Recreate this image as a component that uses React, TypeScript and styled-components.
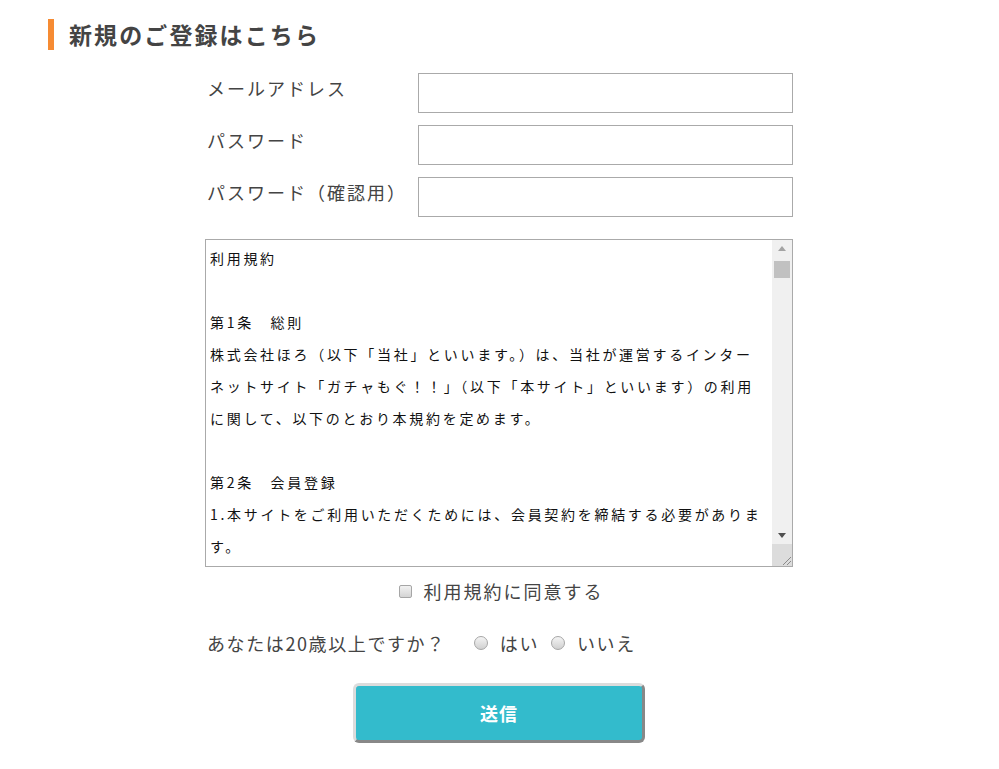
import styled, { createGlobalStyle } from 'styled-components';

const GlobalStyle = createGlobalStyle`
  body {
    margin: 0;
    background: #fff;
    font-family: "Noto Sans CJK JP", "Noto Sans", sans-serif;
    color: #444;
  }
`;

//Styles
const Page = styled.div`
  padding: 19px 0 26px 48px;
  width: 951px;
`;
const Heading = styled.h2`
  margin: 0;
  height: 31px;
  line-height: 31px;
  border-left: 6px solid #f68b33;
  padding-left: 15px;
  font-size: 23px;
  font-weight: bold;
  letter-spacing: 2.1px;
  color: #444;
`;
const Form = styled.form`
  width: 588px;
  margin: 23px 0 0 157px;
`;
const Fields = styled.div`
  display: grid;
  grid-template-columns: 213px 1fr;
  row-gap: 12px;
`;
const Label = styled.label`
  font-size: 18px;
  line-height: 30px;
  letter-spacing: 2px;
  padding-left: 2px;
  color: #444;
`;
const Input = styled.input`
  box-sizing: border-box;
  height: 40px;
  width: 100%;
  border: 1px solid #aaa;
  padding: 0 8px;
  font-size: 16px;
  outline: none;
`;
const TermsBox = styled.div`
  box-sizing: border-box;
  display: flex;
  height: 328px;
  margin-top: 22px;
  border: 1px solid #aaa;
`;
const TermsText = styled.textarea`
  flex: 1;
  border: none;
  outline: none;
  resize: none;
  overflow: hidden;
  padding: 2px 8px 0 4px;
  font-family: "Noto Sans CJK JP", sans-serif;
  font-size: 14px;
  line-height: 32px;
  letter-spacing: 2.7px;
  color: #111;
  background: #fff;
`;
const ScrollBar = styled.div`
  display: flex;
  flex-direction: column;
  width: 20px;
  background: #f0f0f0;
`;
const ArrowButton = styled.div<{ $dir: 'up' | 'down' }>`
  height: 17px;
  display: flex;
  align-items: center;
  justify-content: center;
  &::before {
    content: '';
    width: 0;
    height: 0;
    border-left: 4px solid transparent;
    border-right: 4px solid transparent;
    ${({ $dir }) =>
      $dir === 'up'
        ? 'border-bottom: 5px solid #a3a3a3;'
        : 'border-top: 5px solid #505050;'}
  }
`;
const Track = styled.div`
  flex: 1;
  padding: 4px 2px 0;
`;
const Thumb = styled.div`
  height: 17px;
  background: #c1c1c1;
`;
const Resizer = styled.div`
  height: 22px;
  background: #dcdcdc;
  display: flex;
  align-items: flex-end;
  justify-content: flex-end;
`;
const AgreeRow = styled.label`
  display: flex;
  align-items: center;
  justify-content: center;
  gap: 12px;
  margin-top: 12px;
  font-size: 18px;
  line-height: 24px;
  letter-spacing: 2px;
  padding-left: 4px;
`;
const CheckBox = styled.input`
  appearance: none;
  margin: 0;
  width: 13px;
  height: 13px;
  border: 1px solid #a6a6a6;
  border-radius: 2px;
  background: linear-gradient(#f2f2f2, #d4d4d4);
`;
const AgeRow = styled.div`
  display: flex;
  align-items: center;
  margin-top: 28px;
  font-size: 18px;
  line-height: 24px;
  letter-spacing: 1.6px;
  padding-left: 2px;
`;
const Question = styled.span`
  margin-right: 28px;
`;
const Choice = styled.label`
  display: flex;
  align-items: center;
  gap: 12px;
  margin-right: 12px;
`;
const Radio = styled.input`
  appearance: none;
  margin: 0;
  width: 14px;
  height: 14px;
  border: 1px solid #a6a6a6;
  border-radius: 50%;
  background: linear-gradient(#f4f4f4, #d0d0d0);
`;
const SubmitButton = styled.button`
  display: block;
  box-sizing: border-box;
  width: 292px;
  height: 60px;
  margin: 28px auto 0;
  border: 3px solid;
  border-color: #dcdcdc #888 #888 #dcdcdc;
  border-radius: 6px;
  background: #33bbcc;
  color: #fff;
  font-family: "Noto Sans CJK JP", sans-serif;
  font-size: 18px;
  font-weight: bold;
  letter-spacing: 1px;
  cursor: pointer;
`;

const TERMS = `利用規約

第1条　総則
株式会社ほろ（以下「当社」といいます。）は、当社が運営するインターネットサイト「ガチャもぐ！！」（以下「本サイト」といいます）の利用に関して、以下のとおり本規約を定めます。

第2条　会員登録
1.本サイトをご利用いただくためには、会員契約を締結する必要があります。
2.会員契約は、本規約に同意のうえ、当社所定の方法により申し込みを行い、当社がこれを承認した時点で成立するものとします。`;

const App = () => {
  return (
    <Page>
      <GlobalStyle />
      <Heading>新規のご登録はこちら</Heading>
      <Form onSubmit={(e) => e.preventDefault()}>
        <Fields>
          <Label>メールアドレス</Label>
          <Input type='email' />
          <Label>パスワード</Label>
          <Input type='password' />
          <Label>パスワード（確認用）</Label>
          <Input type='password' />
        </Fields>

        <TermsBox>
          <TermsText readOnly defaultValue={TERMS} />
          <ScrollBar>
            <ArrowButton $dir='up' />
            <Track>
              <Thumb />
            </Track>
            <ArrowButton $dir='down' />
            <Resizer>
              <svg width='12' height='12' viewBox='0 0 12 12'>
                <line x1='11' y1='3' x2='3' y2='11' stroke='#8a8a8a' strokeWidth='1' />
                <line x1='11' y1='7' x2='7' y2='11' stroke='#8a8a8a' strokeWidth='1' />
              </svg>
            </Resizer>
          </ScrollBar>
        </TermsBox>

        <AgreeRow>
          <CheckBox type='checkbox' />
          利用規約に同意する
        </AgreeRow>

        <AgeRow>
          <Question>あなたは20歳以上ですか？</Question>
          <Choice>
            <Radio type='radio' name='age' />
            はい
          </Choice>
          <Choice>
            <Radio type='radio' name='age' />
            いいえ
          </Choice>
        </AgeRow>

        <SubmitButton type='submit'>送信</SubmitButton>
      </Form>
    </Page>
  );
};

export default App;
